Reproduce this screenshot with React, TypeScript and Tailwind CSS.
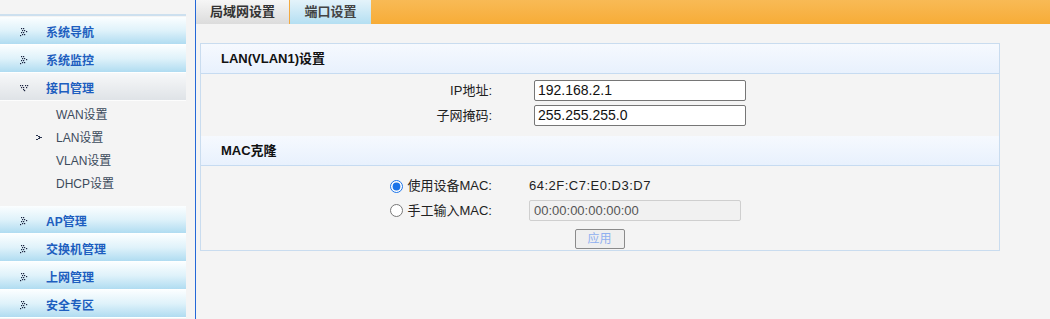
import React from "react";

const font = { fontFamily: '"Liberation Sans", "Noto Sans CJK SC", sans-serif' };

function DotArrow({ down = false }: { down?: boolean }) {
  const dots = down
    ? [[0, 1], [2, 1], [5, 1], [7, 1], [1, 3], [3, 3], [6, 3], [3, 5], [4, 6]]
    : [[1, 0], [3, 0], [2, 2], [4, 2], [6, 3], [1, 4], [3, 4], [2, 6], [0, 7], [4, 6]];
  return (
    <svg width="9" height="9" viewBox="0 0 9 9" className="shrink-0">
      {dots.map(([x, y], i) => (
        <rect key={i} x={x} y={y} width="1.2" height="1.2" fill="#1b2440" />
      ))}
    </svg>
  );
}

function NavItem({ label, open = false }: { label: string; open?: boolean }) {
  return (
    <div
      className={
        "h-[28px] flex items-center pl-[20px] pt-[4px] border-b border-white/70 " +
        (open
          ? "bg-gradient-to-b from-[#f7f8f9] to-[#dfe3e7]"
          : "bg-gradient-to-b from-[#fbfeff] via-[#dff2fa] to-[#b0dcf1]")
      }
    >
      <DotArrow down={open} />
      <span className="ml-[17px] text-[12px] font-bold text-[#1d5ebf]">{label}</span>
    </div>
  );
}

function SubItem({ label, active = false }: { label: string; active?: boolean }) {
  return (
    <div className="h-[23px] flex items-center text-[12px] text-[#3c4b5c]">
      <span className="w-[56px] flex justify-end pr-[14px]">
        {active && (
          <svg width="6" height="5" viewBox="0 0 6 5">
            <rect x="0" y="0" width="2" height="1" fill="#2a3550" />
            <rect x="2" y="1" width="2" height="1" fill="#2a3550" />
            <rect x="3" y="2" width="3" height="1" fill="#2a3550" />
            <rect x="2" y="3" width="2" height="1" fill="#2a3550" />
            <rect x="0" y="4" width="2" height="1" fill="#2a3550" />
          </svg>
        )}
      </span>
      <span>{label}</span>
    </div>
  );
}

function SectionHead({ title }: { title: string }) {
  return (
    <div className="h-[30px] flex items-center pl-[20px] border-b border-[#c6dbf1] bg-gradient-to-b from-[#f6f9fe] to-[#e8f1fd] text-[13px] font-bold text-[#111]">
      {title}
    </div>
  );
}

export default function App() {
  return (
    <div className="w-[1050px] h-[319px] overflow-hidden bg-[#f4f4f4] flex" style={font}>
      {/* Sidebar */}
      <aside className="w-[186px] shrink-0 pt-[14px]">
        <div className="h-[2px] mb-[1px] bg-[#cde0ef]" />
        <NavItem label="系统导航" />
        <NavItem label="系统监控" />
        <NavItem label="接口管理" open />
        <div className="pt-[2px] pb-[11px]">
          <SubItem label="WAN设置" />
          <SubItem label="LAN设置" active />
          <SubItem label="VLAN设置" />
          <SubItem label="DHCP设置" />
        </div>
        <NavItem label="AP管理" />
        <NavItem label="交换机管理" />
        <NavItem label="上网管理" />
        <NavItem label="安全专区" />
      </aside>

      <div className="w-[9px] shrink-0" />
      <div className="w-[1px] shrink-0 bg-[#2468d8]" />

      {/* Main */}
      <main className="flex-1 flex flex-col">
        <div className="h-[24px] flex bg-gradient-to-b from-[#f8ba55] to-[#f7ac36]">
          <div className="w-[93px] flex items-center justify-center bg-gradient-to-b from-[#f6f6f6] to-[#dcdcdc] text-[13px] font-bold text-[#333]">
            局域网设置
          </div>
          <div className="w-[1px] bg-[#f3a93f]" />
          <div className="w-[81px] flex items-center justify-center bg-gradient-to-b from-[#e4f3fa] to-[#b4dff2] text-[13px] font-bold text-[#444]">
            端口设置
          </div>
        </div>

        <div className="ml-[4px] mt-[19px] w-[800px] border border-[#c9dcef]">
          <SectionHead title="LAN(VLAN1)设置" />
          <div className="pt-[6px] pb-[10px] flex flex-col gap-[4px] text-[13px] text-[#222]">
            <div className="h-[21px] flex items-center">
              <span className="w-[291px] text-right">IP地址:</span>
              <input
                readOnly
                value="192.168.2.1"
                className="ml-[42px] w-[212px] h-[21px] border border-[#767676] rounded-[2px] bg-white px-[3px] text-[14px] text-[#111] outline-none"
              />
            </div>
            <div className="h-[21px] flex items-center">
              <span className="w-[291px] text-right">子网掩码:</span>
              <input
                readOnly
                value="255.255.255.0"
                className="ml-[42px] w-[212px] h-[21px] border border-[#767676] rounded-[2px] bg-white px-[3px] text-[14px] text-[#111] outline-none"
              />
            </div>
          </div>
          <SectionHead title="MAC克隆" />
          <div className="pt-[10px] pb-[1px] flex flex-col text-[13px] text-[#222]">
            <div className="h-[20px] flex items-center">
              <div className="w-[291px] flex items-center justify-end">
                <input type="radio" name="mac" defaultChecked className="m-0 mr-[4px] w-[13px] h-[13px] accent-[#1a73e8]" />
                <span>使用设备MAC:</span>
              </div>
              <span className="ml-[37px] tracking-[0.5px]">64:2F:C7:E0:D3:D7</span>
            </div>
            <div className="mt-[2px] h-[25px] flex items-center">
              <div className="w-[291px] flex items-center justify-end">
                <input type="radio" name="mac" className="m-0 mr-[4px] w-[13px] h-[13px]" />
                <span>手工输入MAC:</span>
              </div>
              <input
                disabled
                value="00:00:00:00:00:00"
                className="ml-[37px] w-[212px] h-[21px] border border-[#cfcfcf] rounded-[2px] bg-[#f1f1f1] px-[4px] text-[13px] text-[#555] outline-none"
              />
            </div>
            <div className="flex justify-center pt-[6px]">
              <button
                disabled
                className="w-[50px] h-[20px] border border-[#8a8a8a] rounded-[2px] bg-[#efefef] text-[12px] text-[#8fb0f0] ml-[-1px]"
              >
                应用
              </button>
            </div>
          </div>
        </div>
      </main>
    </div>
  );
}
